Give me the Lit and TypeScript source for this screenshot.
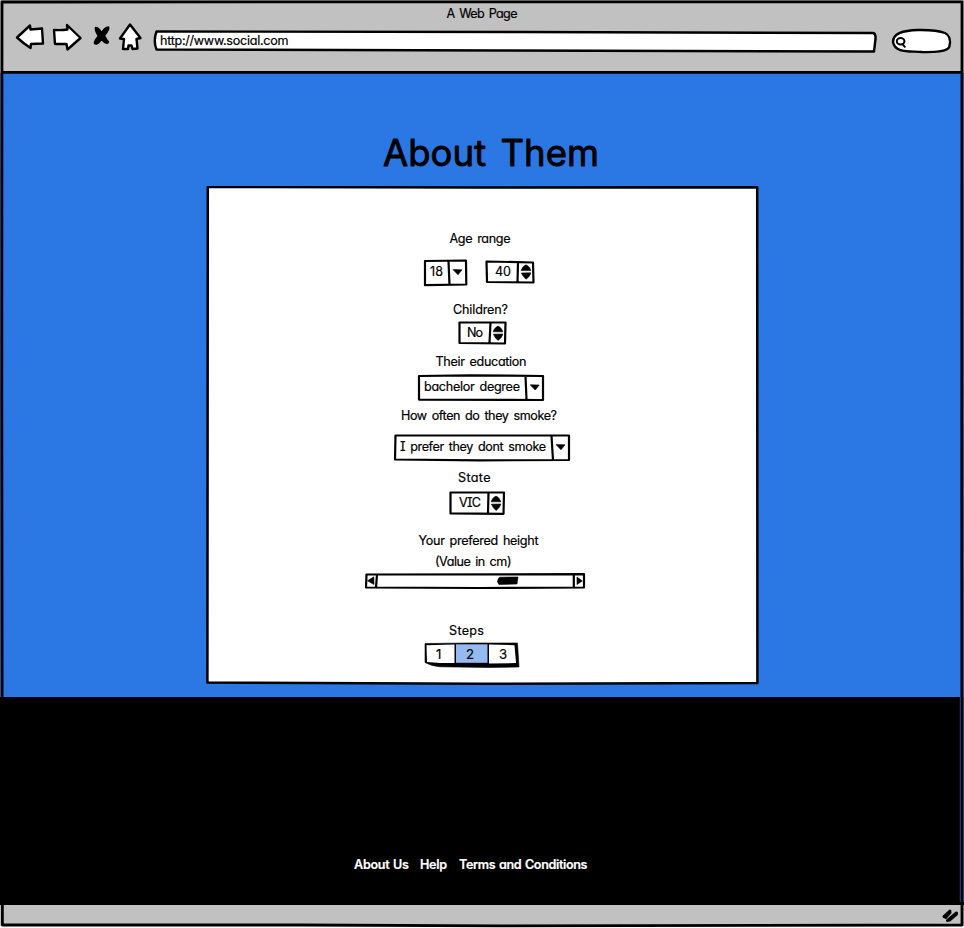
import { LitElement, html, svg, css } from "lit";
import { customElement } from "lit/decorators.js";

const T = (x: number, y: number, w: number, s: string) =>
  svg`<text x=${x} y=${y} textLength=${w}>${s}</text>`;

// A drawing whose inner coordinates are those of the whole page.
const fig = (name: string, x: number, y: number, w: number, h: number, body: unknown) =>
  html`<svg class=${name} width=${w} height=${h} viewBox="${x} ${y} ${w} ${h}">${body}</svg>`;

const down = (x: number, y: number) =>
  svg`<path class="ink" d="M${x - 4.5} ${y - 2.4}L${x + 4.5} ${y - 2.2}L${x + 0.5} ${y + 2.8}Z"/>`;

const spin = (x: number, y: number) => svg`
  <path class="ink" d="M${x - 4.8} ${y - 1.2}Q${x - 4} ${y - 5} ${x} ${y - 7}Q${x + 4} ${y - 5} ${x + 4.8} ${y - 1.2}Z"/>
  <path class="ink" d="M${x - 4.6} ${y + 1.2}L${x + 4.8} ${y + 1}Q${x + 4} ${y + 5} ${x} ${y + 7.4}Q${x - 3} ${y + 5} ${x - 4.6} ${y + 1.2}Z"/>`;

@customElement("app-root")
export class AppRoot extends LitElement {
  static styles = css`
    :host {
      display: block;
      position: relative;
      width: 964px;
      height: 928px;
      overflow: hidden;
      background: #fff;
    }
    svg { display: block; flex: none; }
    text {
      font-family: Inter, "Open Sans", sans-serif;
      font-size: 12.6px;
      font-weight: 400;
      font-feature-settings: "cv11" 1, "cv08" 1;
      word-spacing: 1.8px;
      fill: #000;
      stroke: #000;
      stroke-width: 0.2;
    }
    .page { display: flex; flex-direction: column; height: 928px; }
    .chrome { height: 73px; background: #c1c1c1; display: flex; }
    .hero {
      height: 624px;
      background: #2b78e4;
      display: flex;
      flex-direction: column;
      align-items: flex-start;
    }
    .foot { height: 208px; background: #000; padding: 152px 0 0 340px; box-sizing: border-box; }
    .foot text { fill: #fff; stroke: #fff; stroke-width: 0.2; font-weight: 600; word-spacing: 0.8px; }
    .status { height: 21px; background: #c1c1c1; display: flex; justify-content: flex-end; }
    .title { margin: 52px 0 0 370px; }
    .title text {
      font-size: 36.5px;
      stroke-width: 0.9;
      stroke-linejoin: round;
      word-spacing: 4px;
    }
    .card {
      position: relative;
      width: 552px;
      height: 500px;
      margin: 5px 0 0 206px;
      display: flex;
      flex-direction: column;
      align-items: flex-start;
    }
    .edge { position: absolute; left: 0; top: 0; }
    .edge .box { stroke-width: 2.5; }
    .rows { position: relative; display: flex; flex-direction: column; align-items: flex-start; padding-top: 44px; }
    .pair { display: flex; gap: 14px; margin: 6px 0 14px 216px; }
    .l1 { margin-left: 234px; }
    .l2 { margin-left: 234px; }
    .kids { margin-left: 250px; }
    .l3 { margin: 8px 0 0 214px; }
    .edu { margin-left: 210px; }
    .l4 { margin: 4px 0 0 184px; }
    .smoke { margin: 7px 0 0 186px; }
    .l5 { margin: 8px 0 0 244px; }
    .state { margin: 2px 0 0 242px; }
    .l6 { margin: 16px 0 0 204px; }
    .slider { margin-left: 158px; }
    .l7 { margin: 32px 0 0 234px; }
    .steps { margin-left: 214px; }
    .steps text { font-size: 13.2px; }
    .box { fill: #fff; stroke: #000; stroke-width: 2.2; stroke-linejoin: round; stroke-linecap: round; }
    .thick { fill: #fff; stroke: #000; stroke-width: 2.4; stroke-linejoin: round; stroke-linecap: round; }
    .ink { fill: #000; stroke: #000; stroke-width: 0.6; stroke-linejoin: round; }
    .cell { fill: #fff; }
    .picked { fill: #94baf1; }
    .cross { fill: #000; stroke: #000; stroke-width: 1.5; stroke-linejoin: round; }
    .lens { fill: none; stroke: #000; stroke-width: 2; stroke-linecap: round; }
    .grip { fill: none; stroke: #000; stroke-width: 3; stroke-linecap: round; stroke-linejoin: round; }
    .frame { position: absolute; left: 0; top: 0; pointer-events: none; }
    .line { fill: none; stroke: #000; stroke-width: 2.8; stroke-linejoin: round; }
    .rim { fill: none; stroke: #2b5da8; stroke-width: 0.8; }
  `;

  render() {
    return html`
      <div class="page">
        <header class="chrome">
          ${fig("bar", 0, 0, 964, 73, svg`
            ${T(446.5, 18, 71, "A Web Page")}
            <path class="thick" d="M17 37.5L30 25.5L30.5 29.5L42 28.5L43 43.5L31 44L30.5 48Q23 43 17 37.5Z"/>
            <path class="thick" d="M54 30Q61 30.5 67.5 29.5L67 25L80.5 38L67.5 49.5L66.5 44L55 44Z"/>
            <path class="cross" d="M95.5 27.5Q99 27.5 101.5 33Q104.5 27.5 108.5 27Q110 29 104.5 35.5Q106 39 108.5 42Q107 45.5 101.5 39.5Q97 45.5 94.5 43.5Q94 41 98.5 36Q95 31 95.5 27.5Z"/>
            <path class="thick" d="M120 38.5L130 24.5L140.5 38L136.5 39L137.5 48.5L132.5 49L131.5 45.5L128.5 45.5L128 49L123 49L124 39Z"/>
            <path class="thick" d="M156.5 31.5L520 32L873 33Q876 33.5 875.5 39L874 51.5L500 50.5L156.5 49.5Q153 41 156.5 31.5Z"/>
            ${T(160, 45, 128.5, "http://www.social.com")}
            <path class="thick" d="M893 42C893 33 903 30.5 918 30C930 29.8 940 31 945 33C949 35 951 40 949.5 46C949 51 936 52.5 922 52C908 51 895 53 893 42Z"/>
            <ellipse class="lens" cx="900.6" cy="41.2" rx="3.8" ry="3.2"/>
            <path class="lens" d="M902.5 44.2L904.8 46.8"/>
          `)}
        </header>
        <main class="hero">
          ${fig("title", 370, 125, 240, 56, T(383, 165.5, 216, "About Them"))}
          <section class="card">
            ${fig("edge", 206, 186, 553, 500, svg`
              <path class="box" d="M207.8 187L480 187.4L757.2 187.2L757.4 683L480 683.8L207.4 682.4Z"/>`)}
            <div class="rows">
              ${fig("l1", 440, 230, 80, 22, T(449.5, 243, 61, "Age range"))}
              <div class="pair">
                ${fig("age", 422, 258, 46, 30, svg`
                  <path class="box" d="M425 261L466 260.5L466.3 284.5L425 285.2ZM448.5 261L449.5 285"/>
                  ${T(430, 276, 13, "18")}${down(457.5, 272)}`)}
                ${fig("age", 482, 258, 54, 30, svg`
                  <path class="box" d="M486.5 261.5L533 262.5L533.5 282.5L487 282ZM518 262L517.5 282"/>
                  ${T(495, 276, 16, "40")}${spin(526, 271.8)}`)}
              </div>
              ${fig("l2", 440, 302, 80, 18, T(453, 314, 55, "Children?"))}
              ${fig("kids", 456, 320, 54, 26, svg`
                <path class="box" d="M459.5 322.5L505.5 322.5L505 343.5L459.5 343ZM490.5 322.5L489.5 343"/>
                ${T(467, 337, 16, "No")}${spin(498, 333)}`)}
              ${fig("l3", 420, 354, 124, 18, T(435.5, 366, 91, "Their education"))}
              ${fig("edu", 416, 372, 130, 32, svg`
                <path class="box" d="M419 376L470 375.3L543 376L543 400L419 399.6ZM525.5 376L526.5 399.5"/>
                ${T(424, 391, 96, "bachelor degree")}${down(534.7, 387.2)}`)}
              ${fig("l4", 390, 408, 180, 18, T(401, 420, 156, "How often do they smoke?"))}
              ${fig("smoke", 392, 433, 180, 29, svg`
                <path class="box" d="M395.5 435.5L569 435.5L569 460L480 460.4L395 459.5ZM551.5 436L553 460"/>
                ${T(400, 451, 146, "I prefer they dont smoke")}${down(560.5, 447)}`)}
              ${fig("l5", 450, 470, 50, 18, T(458, 482, 32.5, "State"))}
              ${fig("state", 448, 490, 60, 26, svg`
                <path class="box" d="M450.5 492.5L504 492.5L503.5 513.8L450.5 513.4ZM488.5 492.5L488 513"/>
                ${T(459, 507, 22, "VIC")}${spin(496, 503)}`)}
              ${fig("l6", 410, 532, 140, 40, svg`
                ${T(418.5, 545, 120, "Your prefered height")}${T(435, 566, 76.5, "(Value in cm)")}`)}
              ${fig("slider", 364, 572, 224, 18, svg`
                <path class="box" d="M366.5 574.5L584 574.2L584 587.5L480 588L366 587.5ZM377 574.5L376 587.5M573.8 574.5L573.8 587.5"/>
                <path class="ink" d="M373.8 576.8L374 584.5L367.5 580.8Z"/>
                <path class="ink" d="M577 577L577 584.5L582.3 581Z"/>
                <path class="ink" d="M499.5 577.2L518 577L517 584L499 584.5Q496 581 499.5 577.2Z"/>`)}
              ${fig("l7", 440, 622, 54, 18, T(449, 635, 35, "Steps"))}
              ${fig("steps", 420, 640, 104, 30, svg`
                <path class="ink" d="M425 643.5L470 643L517.5 643L519 667L489 667.5L440 666.8Q431 666 425 662.5Z"/>
                <path class="cell" d="M426.5 645.2L454.5 644.5L454.5 663L440 663L427 662Z"/>
                <path class="picked" d="M456 644.3L487.5 644.3L487.5 662.8L456 662.8Z"/>
                <path class="cell" d="M489 644.5L514.5 645.2L516 663L489 663.6Z"/>
                ${T(436, 659, 8, "1")}${T(466, 659, 8, "2")}${T(499, 659, 8, "3")}`)}
            </div>
          </section>
        </main>
        <footer class="foot">
          ${fig("links", 340, 849, 260, 36, svg`
            ${T(354, 869, 55, "About Us")}${T(420, 869, 27, "Help")}${T(459, 869, 128.5, "Terms and Conditions")}`)}
        </footer>
        <div class="status">
          ${fig("resize", 934, 905, 30, 21, svg`
            <path class="grip" d="M944 916.5L950 911M945.5 917.5L950 912.5M947.5 920.5L956.5 913M949.5 920L956.5 914"/>`)}
        </div>
      </div>
      ${fig("frame", 0, 0, 964, 928, svg`
        <path class="line" d="M2 2L962 1.8L961.8 500L962 925L500 925.8L300 925L2.4 925L1.8 400Z"/>
        <path class="line" d="M2 72.3L962 72.3"/>
        <path class="rim" d="M960.3 697V902M963.6 74V902"/>`)}
    `;
  }
}
